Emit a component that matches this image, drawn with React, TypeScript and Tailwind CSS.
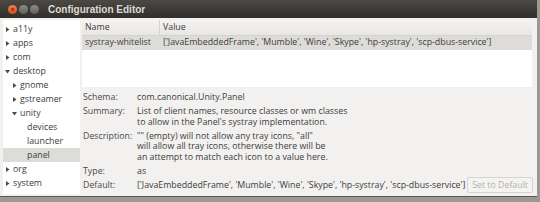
import { ReactNode } from "react";

type Node = { label: string; depth: number; open?: boolean; leaf?: boolean; selected?: boolean };

const TREE: Node[] = [
  { label: "a11y", depth: 0 },
  { label: "apps", depth: 0 },
  { label: "com", depth: 0 },
  { label: "desktop", depth: 0, open: true },
  { label: "gnome", depth: 1 },
  { label: "gstreamer", depth: 1 },
  { label: "unity", depth: 1, open: true },
  { label: "devices", depth: 2, leaf: true },
  { label: "launcher", depth: 2, leaf: true },
  { label: "panel", depth: 2, leaf: true, selected: true },
  { label: "org", depth: 0 },
  { label: "system", depth: 0 },
];

const VALUE = "['JavaEmbeddedFrame', 'Mumble', 'Wine', 'Skype', 'hp-systray', 'scp-dbus-service']";

function Arrow({ open }: { open?: boolean }) {
  return (
    <svg width="5" height="5" viewBox="0 0 5 5" className="shrink-0">
      {open ? <path d="M0 1 L5 1 L2.5 4.5 Z" fill="#4a4a48" /> : <path d="M1 0 L4.5 2.5 L1 5 Z" fill="#4a4a48" />}
    </svg>
  );
}

function Row({ label, children }: { label: string; children: ReactNode }) {
  return (
    <>
      <div className="text-[#4a4a4a] whitespace-nowrap">{label}</div>
      <div className="whitespace-nowrap">{children}</div>
    </>
  );
}

export default function App() {
  return (
    <div
      className="w-[540px] h-[202px] overflow-hidden bg-[#9a9996] text-[8.8px] text-[#3c3c3c]"
      style={{ fontFamily: '"Open Sans", "DejaVu Sans", sans-serif' }}
    >
      {/* title bar */}
      <div className="h-[18px] flex items-center bg-gradient-to-b from-[#4a4945] to-[#302f2b] pl-[8px] mr-[3px]">
        <div className="w-[9px] h-[9px] rounded-full bg-gradient-to-b from-[#f57d4e] to-[#d94a1c] flex items-center justify-center">
          <span className="text-[7px] leading-none text-[#6a2812] font-bold">×</span>
        </div>
        <div className="w-[9px] h-[9px] rounded-full bg-gradient-to-b from-[#8f8d88] to-[#5f5e5a] ml-[2px]" />
        <div className="w-[9px] h-[9px] rounded-full bg-gradient-to-b from-[#8f8d88] to-[#5f5e5a] ml-[2px]" />
        <div
          className="ml-[9px] font-bold text-[10px] text-[#dfdbd2]"
          style={{ fontFamily: '"Liberation Sans", Arial, sans-serif' }}
        >
          Configuration Editor
        </div>
      </div>

      {/* body */}
      <div className="h-[179px] mr-[3px] bg-[#f2f1f0] flex px-[3px] pt-[2px] pb-[2px] border-b border-[#5a5955]">
        {/* tree */}
        <div className="w-[77px] bg-white pt-[2px] flex flex-col">
          {TREE.map((n) => (
            <div
              key={n.label}
              className={`h-[14px] flex items-center ${n.selected ? "bg-[#dedcd8]" : ""}`}
              style={{ paddingLeft: 2 + n.depth * 7 }}
            >
              {n.leaf ? <span className="w-[5px]" /> : <Arrow open={n.open} />}
              <span className="ml-[3px] leading-none">{n.label}</span>
            </div>
          ))}
        </div>

        {/* right side */}
        <div className="flex-1 ml-[2px] flex flex-col">
          <div className="h-[67px] bg-white mr-[2px] flex flex-col">
            <div className="h-[16px] flex bg-gradient-to-b from-[#f4f3f2] to-[#e8e7e5] border-b border-[#d3d2cf]">
              <div className="w-[78px] pl-[3px] flex items-center border-r border-[#d3d2cf]">Name</div>
              <div className="pl-[3px] flex items-center">Value</div>
            </div>
            <div className="h-[14px] flex bg-[#dedcd8]">
              <div className="w-[78px] pl-[3px] flex items-center whitespace-nowrap">systray-whitelist</div>
              <div className="pl-[3px] flex items-center whitespace-nowrap">{VALUE}</div>
            </div>
          </div>

          <div className="grid grid-cols-[54px_1fr] gap-y-[3.5px] leading-[10.5px] pl-[1px] pt-[5px]">
            <Row label="Schema:">com.canonical.Unity.Panel</Row>
            <Row label="Summary:">
              List of client names, resource classes or wm classes
              <br />
              to allow in the Panel's systray implementation.
            </Row>
            <Row label="Description:">
              "" (empty) will not allow any tray icons, "all"
              <br />
              will allow all tray icons, otherwise there will be
              <br />
              an attempt to match each icon to a value here.
            </Row>
            <Row label="Type:">as</Row>
            <div className="text-[#4a4a4a] h-[10.5px]">Default:</div>
            <div className="flex items-center h-[10.5px]">
              <span className="whitespace-nowrap">{VALUE}</span>
              <div className="ml-auto mr-[1px] h-[16px] shrink-0 px-[4px] flex items-center border border-[#d6d5d2] rounded-[2px] bg-[#f4f3f2] text-[#b3b2ae]">
                Set to Default
              </div>
            </div>
          </div>
        </div>
      </div>
    </div>
  );
}
